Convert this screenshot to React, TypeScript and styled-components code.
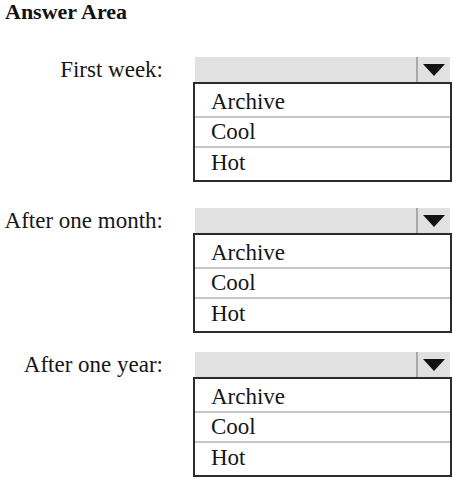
import React from "react";
import styled, { createGlobalStyle } from "styled-components";

const Global = createGlobalStyle`
  html, body { margin: 0; padding: 0; background: #ffffff; }
  body { font-family: "Liberation Serif", "Times New Roman", serif; color: #161616; }
`;

const Page = styled.div`
  width: 453px;
  height: 479px;
  overflow: hidden;
  padding-left: 3px;
  box-sizing: border-box;
`;

const Title = styled.h1`
  margin: 0;
  padding-left: 2px;
  font-size: 22px;
  line-height: 24px;
  font-weight: bold;
  color: #111;
`;

const Section = styled.div<{ $top: number }>`
  display: flex;
  align-items: flex-start;
  gap: 30px;
  margin-top: ${(p) => p.$top}px;
`;

const Label = styled.div`
  width: 160px;
  text-align: right;
  font-size: 23px;
  line-height: 25px;
  white-space: nowrap;
`;

const Dropdown = styled.div`
  width: 259px;
  display: flex;
  flex-direction: column;
`;

const Bar = styled.div`
  height: 25px;
  margin: 0 2px 0 2px;
  background: #e1e1e1;
  display: flex;
  justify-content: flex-end;
`;

const ArrowCell = styled.div`
  width: 32px;
  border-left: 2px solid #a9a9a9;
  display: flex;
  align-items: center;
  justify-content: center;
`;

const List = styled.div`
  border: 2px solid #2b2b2b;
  display: flex;
  flex-direction: column;
`;

const Option = styled.div<{ $h: number; $pb: number }>`
  height: ${(p) => p.$h}px;
  display: flex;
  align-items: flex-end;
  padding: 0 0 ${(p) => p.$pb}px 16px;
  box-sizing: border-box;
  font-size: 23px;
  line-height: 23px;
  & + & {
    border-top: 2px solid #c6c6c6;
  }
`;

const Arrow = () => (
  <svg width="22" height="12" viewBox="0 0 22 12">
    <polygon points="0,0 22,0 11,12" fill="#111" />
  </svg>
);

const sections = [
  { label: "First week:", top: 33 },
  { label: "After one month:", top: 26 },
  { label: "After one year:", top: 19 },
];

const options: [string, number, number][] = [
  ["Archive", 32, 3],
  ["Cool", 30, 3],
  ["Hot", 34, 6],
];

export default function App() {
  return (
    <Page>
      <Global />
      <Title>Answer Area</Title>
      {sections.map((s) => (
        <Section key={s.label} $top={s.top}>
          <Label>{s.label}</Label>
          <Dropdown>
            <Bar>
              <ArrowCell>
                <Arrow />
              </ArrowCell>
            </Bar>
            <List>
              {options.map(([o, h, pb]) => (
                <Option key={o} $h={h} $pb={pb}>
                  {o}
                </Option>
              ))}
            </List>
          </Dropdown>
        </Section>
      ))}
    </Page>
  );
}
